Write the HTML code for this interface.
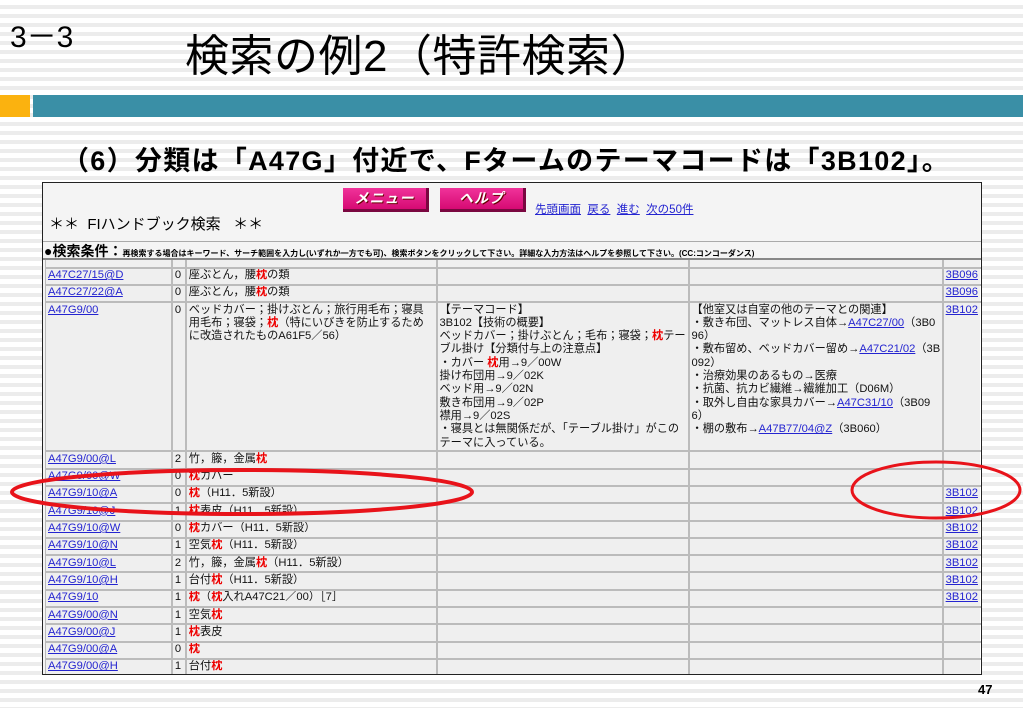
<!DOCTYPE html>
<html><head><meta charset="utf-8"><style>
*{margin:0;padding:0;box-sizing:border-box}
body{width:1023px;height:708px;overflow:hidden;position:relative;font-family:"Liberation Sans","Noto Sans CJK JP",sans-serif;
background:repeating-linear-gradient(180deg,#fff 0,#fff 5px,#ececec 5px,#ececec 9px);}
.abs{position:absolute}
#shot{position:absolute;left:42px;top:182px;width:940px;height:493px;border:1px solid #222;background:#f4f4f4;overflow:hidden}
.btn{position:absolute;top:5px;width:86px;height:24px;background:linear-gradient(#f0339a,#d60a73);border-right:3px solid #7a0740;border-bottom:3px solid #7a0740;color:#fff;font-weight:bold;font-style:italic;font-size:14px;text-align:center;line-height:21px;letter-spacing:1px;text-shadow:1px 1px 0 #600}
a{color:#2424d0;text-decoration:underline}
table{position:absolute;left:2px;top:76px;border-collapse:collapse;font-size:11.2px;line-height:13.3px;table-layout:fixed}
td{border:1px solid #fff;outline:1px solid #bbb;background:#efefef;padding:1px 2px;vertical-align:top;height:17.3px;white-space:nowrap;overflow:hidden;color:#111}
tr.p td{height:8px;padding:0;font-size:0;line-height:0}
td.w{white-space:normal;word-break:break-all}
b.r{color:#e00;font-weight:bold}
</style></head><body>
<div class="abs" style="left:10px;top:12px;font-size:30px;color:#000">3－3</div>
<div class="abs" style="left:185px;top:20px;font-size:44px;color:#000;letter-spacing:0.5px">検索の例2（特許検索）</div>
<div class="abs" style="left:0;top:95px;width:30px;height:22px;background:#fbb20f"></div>
<div class="abs" style="left:33px;top:95px;width:990px;height:22px;background:#3a8fa6"></div>
<div class="abs" style="left:62px;top:139px;font-size:27px;font-weight:bold;color:#000;letter-spacing:1.3px;white-space:nowrap">（6）分類は「A47G」付近で、Fタームのテーマコードは「3B102」。</div>
<div id="shot">
<div class="btn" style="left:300px">メニュー</div>
<div class="btn" style="left:397px">ヘルプ</div>
<div class="abs" style="left:492px;top:18px;font-size:11.5px"><a>先頭画面</a>&nbsp; <a>戻る</a>&nbsp; <a>進む</a>&nbsp; <a>次の50件</a></div>
<div class="abs" style="left:6px;top:30px;font-size:15px">＊＊&nbsp; FIハンドブック検索&nbsp;&nbsp; ＊＊</div>
<div class="abs" style="left:0;top:58px;width:940px;border-top:1px solid #aaa"></div>
<div class="abs" style="left:1px;top:58px;font-size:14px;font-weight:bold;white-space:nowrap;z-index:3">●検索条件：<span style="font-size:8px">再検索する場合はキーワード、サーチ範囲を入力し(いずれか一方でも可)、検索ボタンをクリックして下さい。詳細な入力方法はヘルプを参照して下さい。(CC:コンコーダンス)</span></div>
<div class="abs" style="left:0;top:75px;width:940px;border-top:2px solid #888;z-index:2"></div>
<table>
<colgroup><col style="width:127px"><col style="width:14px"><col style="width:251px"><col style="width:253px"><col style="width:255px"><col style="width:35px"></colgroup>
<tr class="p"><td></td><td></td><td></td><td></td><td></td><td></td></tr>
<tr><td><a>A47C27/15@D</a></td><td>0</td><td>座ぶとん，腰<b class="r">枕</b>の類</td><td></td><td></td><td><a>3B096</a></td></tr>
<tr><td><a>A47C27/22@A</a></td><td>0</td><td>座ぶとん，腰<b class="r">枕</b>の類</td><td></td><td></td><td><a>3B096</a></td></tr>
<tr><td style="height:147px"><a>A47G9/00</a></td><td>0</td><td class="w">ベッドカバー；掛けぶとん；旅行用毛布；寝具用毛布；寝袋；<b class="r">枕</b>（特にいびきを防止するために改造されたものA61F5／56）</td><td class="w">【テーマコード】<br>3B102【技術の概要】<br>ベッドカバー；掛けぶとん；毛布；寝袋；<b class="r">枕</b>テーブル掛け【分類付与上の注意点】<br>・カバー <b class="r">枕</b>用→9／00W<br>掛け布団用→9／02K<br>ベッド用→9／02N<br>敷き布団用→9／02P<br>襟用→9／02S<br>・寝具とは無関係だが、「テーブル掛け」がこのテーマに入っている。</td><td class="w">【他室又は自室の他のテーマとの関連】<br>・敷き布団、マットレス自体→<a>A47C27/00</a>（3B096）<br>・敷布留め、ベッドカバー留め→<a>A47C21/02</a>（3B092）<br>・治療効果のあるもの→医療<br>・抗菌、抗カビ繊維→繊維加工（D06M）<br>・取外し自由な家具カバー→<a>A47C31/10</a>（3B096）<br>・棚の敷布→<a>A47B77/04@Z</a>（3B060）</td><td><a>3B102</a></td></tr>
<tr><td><a>A47G9/00@L</a></td><td>2</td><td>竹，籐，金属<b class="r">枕</b></td><td></td><td></td><td></td></tr>
<tr><td><a>A47G9/00@W</a></td><td>0</td><td><b class="r">枕</b>カバー</td><td></td><td></td><td></td></tr>
<tr><td><a>A47G9/10@A</a></td><td>0</td><td><b class="r">枕</b>（H11．5新設）</td><td></td><td></td><td><a>3B102</a></td></tr>
<tr><td><a>A47G9/10@J</a></td><td>1</td><td><b class="r">枕</b>表皮（H11．5新設）</td><td></td><td></td><td><a>3B102</a></td></tr>
<tr><td><a>A47G9/10@W</a></td><td>0</td><td><b class="r">枕</b>カバー（H11．5新設）</td><td></td><td></td><td><a>3B102</a></td></tr>
<tr><td><a>A47G9/10@N</a></td><td>1</td><td>空気<b class="r">枕</b>（H11．5新設）</td><td></td><td></td><td><a>3B102</a></td></tr>
<tr><td><a>A47G9/10@L</a></td><td>2</td><td>竹，籐，金属<b class="r">枕</b>（H11．5新設）</td><td></td><td></td><td><a>3B102</a></td></tr>
<tr><td><a>A47G9/10@H</a></td><td>1</td><td>台付<b class="r">枕</b>（H11．5新設）</td><td></td><td></td><td><a>3B102</a></td></tr>
<tr><td><a>A47G9/10</a></td><td>1</td><td><b class="r">枕</b>（<b class="r">枕</b>入れA47C21／00）［7］</td><td></td><td></td><td><a>3B102</a></td></tr>
<tr><td><a>A47G9/00@N</a></td><td>1</td><td>空気<b class="r">枕</b></td><td></td><td></td><td></td></tr>
<tr><td><a>A47G9/00@J</a></td><td>1</td><td><b class="r">枕</b>表皮</td><td></td><td></td><td></td></tr>
<tr><td><a>A47G9/00@A</a></td><td>0</td><td><b class="r">枕</b></td><td></td><td></td><td></td></tr>
<tr><td><a>A47G9/00@H</a></td><td>1</td><td>台付<b class="r">枕</b></td><td></td><td></td><td></td></tr>
</table>
</div>
<svg class="abs" style="left:0;top:0" width="1023" height="708">
<ellipse cx="242" cy="492" rx="230" ry="22" fill="none" stroke="#e8131a" stroke-width="4"/>
<ellipse cx="936" cy="490" rx="84" ry="28" fill="none" stroke="#e8131a" stroke-width="3"/>
</svg>
<div class="abs" style="left:978px;top:682px;font-size:13px;font-weight:bold">47</div>
</body></html>
